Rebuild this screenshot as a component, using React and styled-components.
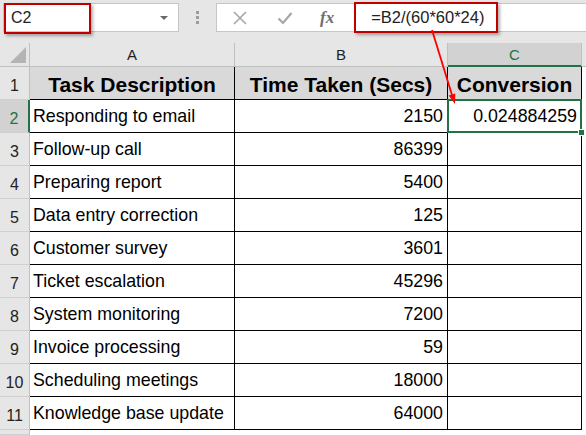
import React from "react";
import styled, { createGlobalStyle, css } from "styled-components";

const GlobalStyle = createGlobalStyle`
  body {
    margin: 0;
    background: #ffffff;
    font-family: "Liberation Sans", Arial, sans-serif;
  }
`;

const Page = styled.div`
  position: relative;
  width: 586px;
  height: 435px;
  overflow: hidden;
  background: #e6e6e6;
`;

const Toolbar = styled.div`
  display: flex;
  align-items: center;
  height: 35px;
  padding: 0 0 0 3px;
  box-sizing: border-box;
`;

const NameBox = styled.div`
  position: relative;
  display: flex;
  align-items: center;
  justify-content: space-between;
  width: 176px;
  height: 29px;
  box-sizing: border-box;
  padding: 0 10px 0 7px;
  background: #fff;
  border: 1px solid #c6c6c6;
  font-size: 16px;
  color: #222;
`;

const Highlight = styled.div`
  position: absolute;
  left: 0;
  top: -1px;
  width: 87px;
  height: 31px;
  box-sizing: border-box;
  border: 2px solid #c00000;
  box-shadow: 2px 2px 3px rgba(0, 0, 0, 0.3);
`;

const Caret = styled.span`
  width: 0;
  height: 0;
  border-left: 4px solid transparent;
  border-right: 4px solid transparent;
  border-top: 4px solid #6a6a6a;
`;

const Grip = styled.div`
  display: flex;
  flex-direction: column;
  gap: 2px;
  margin: 0 17px 0 17px;
  span {
    width: 3px;
    height: 3px;
    background: #9c9c9c;
  }
`;

const FormulaBar = styled.div`
  flex: 1;
  display: flex;
  align-items: center;
  height: 29px;
  box-sizing: border-box;
  background: #fff;
  border: 1px solid #c6c6c6;
  border-right: none;
  padding-left: 15px;
`;

const IconButton = styled.div`
  display: flex;
  align-items: center;
  justify-content: center;
  width: 16px;
  margin-right: 29px;
`;

const Fx = styled.span`
  font-family: "Liberation Serif", "Times New Roman", serif;
  font-style: italic;
  font-weight: bold;
  font-size: 17px;
  color: #6e6e6e;
  margin: 0 20px 0 -2px;
`;

const FormulaText = styled.div`
  display: flex;
  align-items: center;
  height: 31px;
  box-sizing: border-box;
  padding: 0 12px 0 15px;
  margin-top: -1px;
  border: 2px solid #c00000;
  box-shadow: 2px 2px 3px rgba(0, 0, 0, 0.3);
  font-size: 16.5px;
  color: #222;
`;

const Sheet = styled.div`
  display: grid;
  grid-template-columns: 30px 205px 213px 134px 4px;
  grid-template-rows: 24px repeat(11, 33px) 1fr;
  margin-top: 8px;
`;

const Corner = styled.div`
  display: flex;
  align-items: flex-end;
  justify-content: flex-end;
  padding: 0 3px 3px 0;
  border-right: 1px solid #c0c0c0;
  border-bottom: 1px solid #c0c0c0;
`;

const ColHead = styled.div`
  display: flex;
  align-items: center;
  justify-content: center;
  font-size: 15px;
  color: #222;
  border-right: 1px solid #c0c0c0;
  border-bottom: 1px solid #c0c0c0;
  ${({ $active }) =>
    $active &&
    css`
      background: #d2d2d2;
      color: #217346;
      border-bottom: 2px solid #217346;
    `}
`;

const RowHead = styled.div`
  display: flex;
  align-items: flex-end;
  justify-content: center;
  padding-bottom: 4px;
  box-sizing: border-box;
  font-size: 16px;
  color: #222;
  border-right: 1px solid #c0c0c0;
  border-bottom: 1px solid #d0d0d0;
  ${({ $active }) =>
    $active &&
    css`
      background: #d2d2d2;
      color: #217346;
      border-right: 2px solid #217346;
    `}
`;

const Cell = styled.div`
  position: relative;
  display: flex;
  align-items: flex-end;
  justify-content: ${({ $num }) => ($num ? "flex-end" : "flex-start")};
  padding: 0 4px 5px 3px;
  box-sizing: border-box;
  background: #fff;
  font-size: 17.8px;
  color: #000;
  white-space: nowrap;
  border-right: 1px solid #000;
  border-bottom: 1px solid #000;
  ${({ $head }) =>
    $head &&
    css`
      background: #d9d9d9;
      justify-content: center;
      align-items: center;
      padding: 3px 0 0;
      font-size: 21px;
      font-weight: bold;
    `}
  ${({ $selected }) =>
    $selected &&
    css`
      z-index: 2;
      &::after {
        content: "";
        position: absolute;
        inset: -1px -1px -1px -1px;
        border: 2px solid #217346;
      }
      &::before {
        content: "";
        position: absolute;
        right: -4px;
        bottom: -4px;
        width: 5px;
        height: 5px;
        background: #217346;
        border: 1px solid #fff;
        z-index: 3;
      }
    `}
`;

const Filler = styled.div`
  background: ${({ $top }) => ($top ? "#e6e6e6" : "#fff")};
  ${({ $top }) => $top && "border-bottom: 1px solid #c0c0c0;"}
`;

const Overlay = styled.svg`
  position: absolute;
  top: 0;
  left: 0;
  pointer-events: none;
  z-index: 10;
`;

const rows = [
  ["Responding to email", 2150, "0.024884259"],
  ["Follow-up call", 86399],
  ["Preparing report", 5400],
  ["Data entry correction", 125],
  ["Customer survey", 3601],
  ["Ticket escalation", 45296],
  ["System monitoring", 7200],
  ["Invoice processing", 59],
  ["Scheduling meetings", 18000],
  ["Knowledge base update", 64000],
];

const App = () => {
  return (
    <Page>
      <GlobalStyle />
      <Toolbar>
        <NameBox>
          C2
          <Caret />
          <Highlight />
        </NameBox>
        <Grip>
          <span />
          <span />
          <span />
        </Grip>
        <FormulaBar>
          <IconButton>
            <svg width="16" height="16" viewBox="0 0 16 16">
              <path d="M2 2 L14 14 M14 2 L2 14" stroke="#a6a6a6" strokeWidth="1.6" fill="none" />
            </svg>
          </IconButton>
          <IconButton>
            <svg width="16" height="16" viewBox="0 0 16 16">
              <path d="M1.5 8.5 L6 13 L14.5 3" stroke="#a6a6a6" strokeWidth="2.2" fill="none" />
            </svg>
          </IconButton>
          <Fx>fx</Fx>
          <FormulaText>=B2/(60*60*24)</FormulaText>
        </FormulaBar>
      </Toolbar>

      <Sheet>
        <Corner>
          <svg width="16" height="16" viewBox="0 0 16 16">
            <polygon points="16,0 16,16 0,16" fill="#b4b4b4" />
          </svg>
        </Corner>
        <ColHead>A</ColHead>
        <ColHead>B</ColHead>
        <ColHead $active>C</ColHead>
        <Filler $top />

        <RowHead>1</RowHead>
        <Cell $head>Task Description</Cell>
        <Cell $head>Time Taken (Secs)</Cell>
        <Cell $head>Conversion</Cell>
        <Filler />

        {rows.map(([task, secs, conv], i) => (
          <React.Fragment key={task}>
            <RowHead $active={i === 0}>{i + 2}</RowHead>
            <Cell>{task}</Cell>
            <Cell $num>{secs}</Cell>
            <Cell $num $selected={i === 0}>
              {conv}
            </Cell>
            <Filler />
          </React.Fragment>
        ))}
        <RowHead />
        <Filler />
        <Filler />
        <Filler />
        <Filler />
      </Sheet>

      <Overlay width="586" height="435">
        <line x1="432" y1="30" x2="452" y2="95" stroke="#ff0000" strokeWidth="1.8" />
        <polygon points="455,104 455.3,93.5 448.7,95.5" fill="#ff0000" />
      </Overlay>
    </Page>
  );
};

export default App;
